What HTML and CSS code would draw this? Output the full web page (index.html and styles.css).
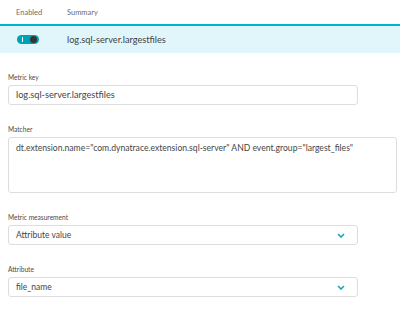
FILE: index.html
```html
<!DOCTYPE html>
<html>
<head>
<meta charset="utf-8">
<link rel="stylesheet" href="styles.css">
</head>
<body>
<div class="table">
  <div class="thead">
    <div class="col-enabled">Enabled</div>
    <div class="col-summary">Summary</div>
  </div>
  <div class="row">
    <div class="col-enabled">
      <span class="toggle"><span class="toggle-i"></span><span class="toggle-knob"></span></span>
    </div>
    <div class="col-summary summary-text">log.sql-server.largestfiles</div>
  </div>
</div>
<form class="form">
  <div class="field">
    <label class="label">Metric key</label>
    <div class="input short">log.sql-server.largestfiles</div>
  </div>
  <div class="field">
    <label class="label">Matcher</label>
    <div class="input textarea">dt.extension.name="com.dynatrace.extension.sql-server" AND event.group="largest_files"</div>
  </div>
  <div class="field">
    <label class="label">Metric measurement</label>
    <div class="input short select"><span>Attribute value</span>
      <svg class="chev" width="8" height="5" viewBox="0 0 8 5"><path d="M1 1 L4 4 L7 1" fill="none" stroke="#1aa4b8" stroke-width="1.6"/></svg>
    </div>
  </div>
  <div class="field">
    <label class="label">Attribute</label>
    <div class="input short select"><span>file_name</span>
      <svg class="chev" width="8" height="5" viewBox="0 0 8 5"><path d="M1 1 L4 4 L7 1" fill="none" stroke="#1aa4b8" stroke-width="1.6"/></svg>
    </div>
  </div>
</form>
</body>
</html>
```
FILE: styles.css
```css
* { box-sizing: border-box; }
body {
  margin: 0;
  font-family: "Lato", "Open Sans", sans-serif;
  color: #454646;
  background: #fff;
}
.thead {
  display: flex;
  height: 26px;
  align-items: center;
  font-size: 7.5px;
  color: #6d6d6d;
  border-bottom: 2px solid #00b4d0;
}
.col-enabled { width: 67px; padding-left: 16px; }
.row {
  display: flex;
  align-items: center;
  height: 27px;
  background: #e1f6fa;
}
.summary-text { font-size: 9.2px; color: #3f3f3f; }
.toggle {
  position: relative;
  display: block;
  width: 22px;
  height: 9px;
  margin-left: 1px;
  border-radius: 5px;
  background: #00a1b2;
}
.toggle-i {
  position: absolute;
  left: 5px;
  top: 2px;
  width: 1px;
  height: 5px;
  background: #fff;
}
.toggle-knob {
  position: absolute;
  right: 2px;
  top: 1px;
  width: 7px;
  height: 7px;
  border-radius: 50%;
  background: #353535;
}
.form { padding: 19px 3px 0 8px; }
.field { margin-bottom: 19px; }
.label {
  display: block;
  font-size: 6.6px;
  color: #4a4a4a;
  height: 10px;
  line-height: 10px;
  margin-bottom: 3px;
}
.input {
  border: 1px solid #dddddd;
  border-radius: 3px;
  height: 20px;
  padding: 0 7px;
  font-size: 9.2px;
  line-height: 18px;
  color: #454646;
}
.short { width: 350px; }
.textarea { height: 56px; padding-top: 4px; font-size: 8.6px; line-height: 12px; }
.select { display: flex; align-items: center; justify-content: space-between; font-size: 8.5px; }
.chev { margin-right: 5px; }
```
